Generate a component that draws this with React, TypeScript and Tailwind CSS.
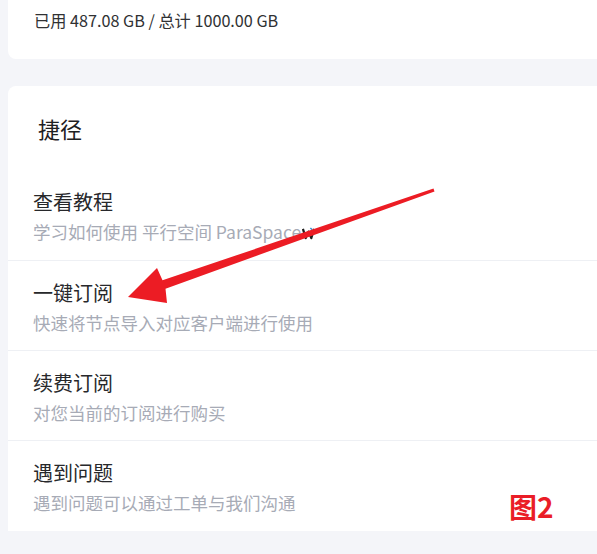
import React from 'react';

const items = [
    { title: '查看教程', desc: '学习如何使用 平行空间 ParaSpace', icon: true },
    { title: '一键订阅', desc: '快速将节点导入对应客户端进行使用' },
    { title: '续费订阅', desc: '对您当前的订阅进行购买' },
    { title: '遇到问题', desc: '遇到问题可以通过工单与我们沟通' },
];

const SparkIcon = () => (
    <svg viewBox="0 0 14 16" className="inline-block w-[13px] h-[15px] ml-[1px] align-[-2px]">
        <path d="M1 3 L4 13 L7 6 L10 13 L13 3" fill="none" stroke="#1e1e1e" strokeWidth="2.4" strokeLinejoin="round" />
        <path d="M3 9 L11 9" stroke="#d8b021" strokeWidth="1.8" />
        <path d="M9 2 L11 4" stroke="#3d8fd0" strokeWidth="1.6" />
    </svg>
);

// red annotation arrow drawn on top of the screenshot
const Arrow = () => (
    <svg className="absolute left-0 top-0 pointer-events-none" width="597" height="554" viewBox="0 0 597 554">
        <polygon
            points="128,297 157,268 162.5,280.3 433.5,188.6 434.5,191.4 165.5,288.7 167,303"
            fill="#ec1c24"
        />
    </svg>
);

export default function App() {
    return (
        <div className="relative w-[597px] h-[554px] overflow-hidden bg-[#f4f5f9] pl-2" style={{ fontFamily: '"Noto Sans CJK SC", "Noto Sans", sans-serif' }}>
            {/* usage card */}
            <div className="bg-white rounded-bl-lg h-[59px] pl-[26px] pt-[6px]">
                <p className="text-[16.2px] leading-[28px] text-[#303133]">已用 487.08 GB / 总计 1000.00 GB</p>
            </div>

            {/* shortcuts card */}
            <div className="mt-[27px] bg-white rounded-tl-lg">
                <div className="h-[84px] pl-[30px] pt-[26px]">
                    <h3 className="text-[22px] leading-[32px] text-[#1f2022]">捷径</h3>
                </div>
                {items.map((item, idx) => (
                    <div key={idx} className={idx === 0 ? 'pl-[25px] h-[90px] pt-[18px]' : idx === 3 ? 'pl-[25px] h-[91px] pt-[18px] border-t border-[#eef0f4]' : 'pl-[25px] h-[90px] pt-[18px] border-t border-[#eef0f4]'}>
                        <div className="text-[20px] leading-[28px] text-[#27282b]">{item.title}</div>
                        <div className="mt-[2px] text-[17.5px] leading-[28px] text-[#a7abb6] whitespace-nowrap">
                            {item.desc}
                            {item.icon && <SparkIcon />}
                        </div>
                    </div>
                ))}
            </div>

            <Arrow />
            <div className="absolute left-[509px] top-[488px] text-[28px] leading-[36px] font-bold text-[#ea1d27]" style={{ fontFamily: '"Noto Sans CJK SC", sans-serif' }}>图2</div>
        </div>
    );
}
